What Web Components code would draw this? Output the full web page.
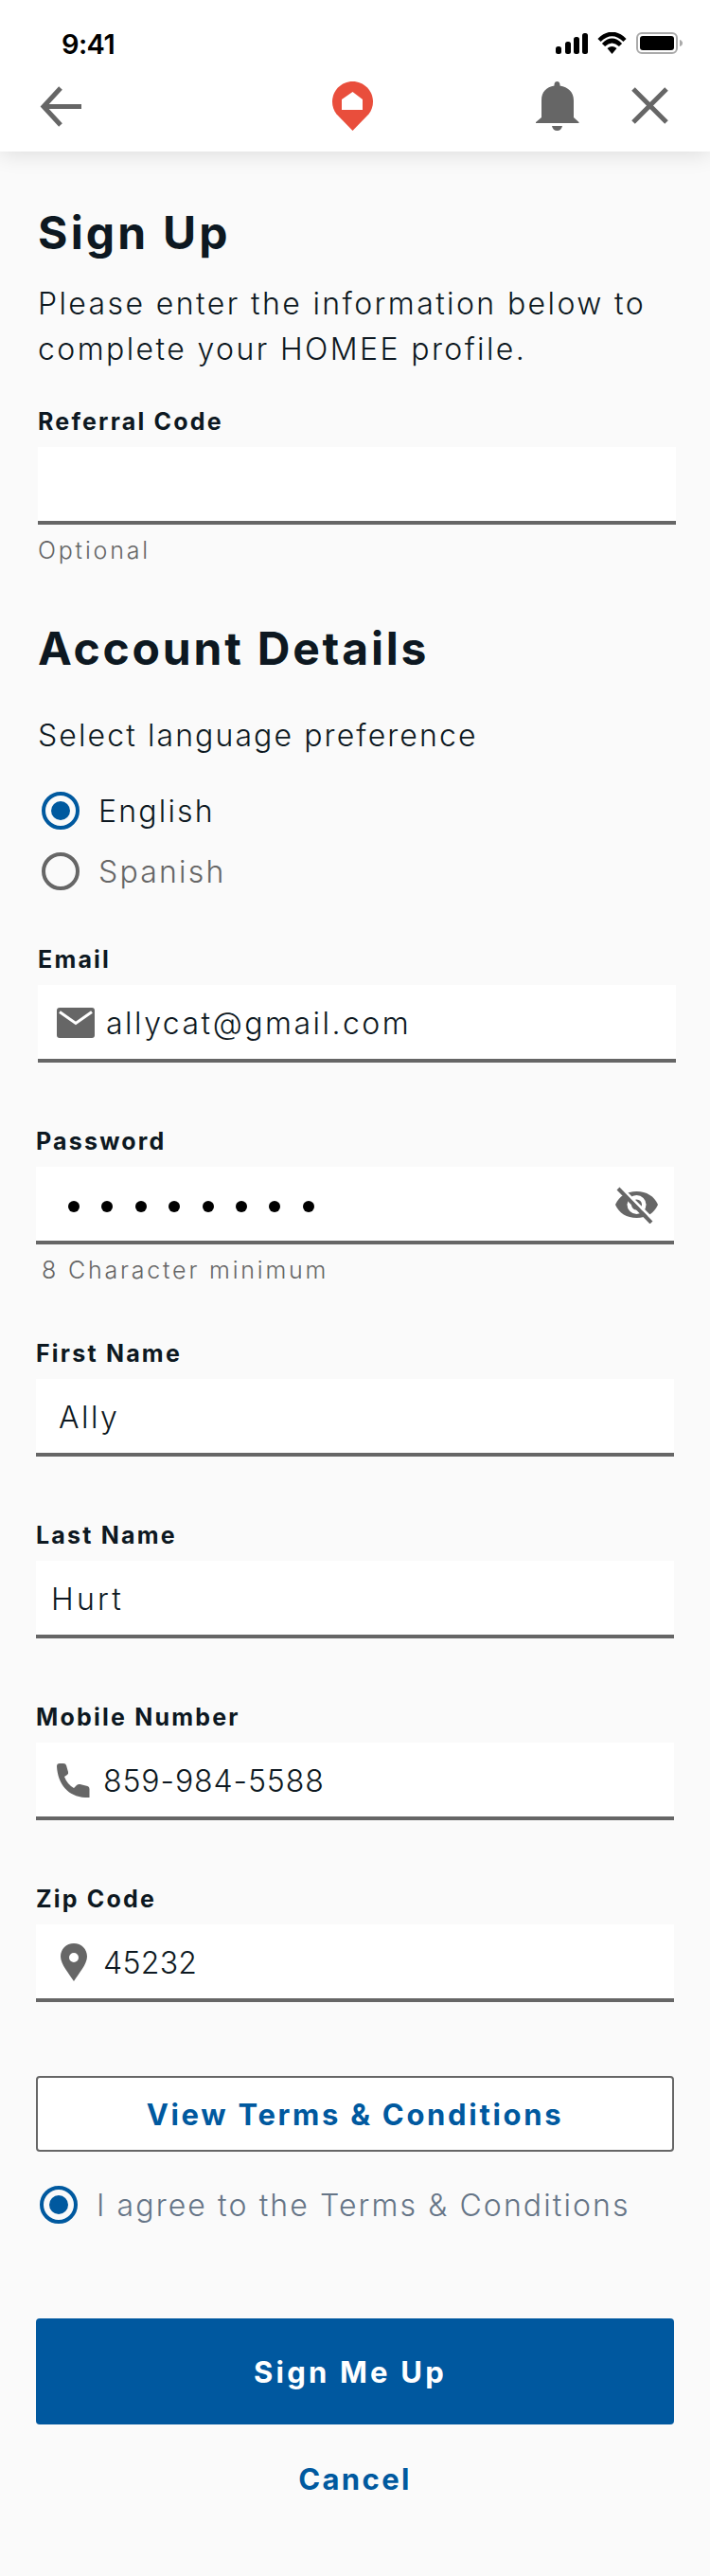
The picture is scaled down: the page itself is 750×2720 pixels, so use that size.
<!DOCTYPE html>
<html><head><meta charset="utf-8">
<style>
html,body{margin:0;padding:0;background:#fafafa}
body{width:750px;height:2720px;overflow:hidden;font-family:Inter,"Noto Sans",sans-serif;color:#0d1821}
</style></head><body>
<template id="t-status"><style>
:host{display:flex;position:relative;z-index:1;justify-content:space-between;height:72px;padding:0 29px 0 65px;box-sizing:border-box;align-items:flex-start;background:#fff}
.t{font:600 29px/30px Inter,sans-serif;color:#000;margin-top:31.500px;letter-spacing:-.6px}
svg{margin-top:34px;display:block}
</style><span class="t">9:41</span>
<svg width="134" height="24" viewBox="0 0 134 24" fill="#000"><rect x="0" y="15" width="6" height="8" rx="2.500"/><rect x="10" y="10" width="6" height="13" rx="2.500"/><rect x="19" y="5" width="6" height="18" rx="2.500"/><rect x="28" y="1" width="6" height="22" rx="2.500"/>
<path d="M46 8.500Q59.500-4.500 73 8.500M50.500 13.500Q59.500 4.500 68.500 13.500" fill="none" stroke="#000" stroke-width="4.500"/><path d="M54.500 17Q59.500 13 64.500 17L59.500 23z"/>
<rect x="86" y="1" width="42" height="21" rx="5" fill="none" stroke="#aaa" stroke-width="2"/><rect x="89" y="4" width="36" height="15" rx="3"/><path d="M131 8q3 1 3 3.500t-3 3.500z" fill="#aaa"/></svg></template>

<template id="t-nav"><style>
:host{display:block;position:relative;height:88px;background:#fff;box-shadow:0 2px 22px rgba(0,0,0,.13)}
svg{display:block;position:absolute}
</style>
<svg style="left:41px;top:18px" width="48" height="45" viewBox="0 0 48 45" fill="none" stroke="#666" stroke-width="5"><path d="M45 22.500H6M23 3L5 22.500 23 42"/></svg>
<svg style="left:351px;top:14px" width="43" height="53" viewBox="0 0 43 53"><path fill="#e94e3c" d="M21.500 0C33.400 0 43 9.600 43 21.500c0 5-1.800 9.500-4.500 13L21.500 52 4.500 34.500C1.800 31 0 26.500 0 21.500 0 9.600 9.600 0 21.500 0z"/><path fill="#fff" d="M10 30V19l11.500-8L32 19v11z"/></svg>
<svg style="left:566px;top:13px" width="46" height="54" viewBox="0 0 46 54" fill="#666"><path d="M0 45v-1l6-5V21C6 12 11 7 19.500 5.500V4.500C19.500 2 21 1 22.500 1s3 1 3 3.500v1C34 7 40 12 40 21v18l5.500 5v1z"/><path d="M17 48h11q-1 5-5.500 5T17 48z"/></svg>
<svg style="left:667px;top:20px" width="39" height="39" viewBox="0 0 39 39" fill="none" stroke="#666" stroke-width="5"><path d="M2 2l35 35M37 2L2 37"/></svg>
</template>

<template id="t-field"><style>
:host{display:block;font-family:Inter,sans-serif}
.l{font-weight:700;font-size:25px;line-height:30px;height:30px;letter-spacing:2.200px;color:#0d1821;margin-bottom:12px;display:block}
.b{height:82px;box-sizing:border-box;padding-top:2px;background:#fff;border-bottom:4px solid #666;display:flex;align-items:center;font-weight:300;font-size:32px;letter-spacing:2.300px;color:#0d1821}
::slotted(svg){display:block;flex:none}
</style><span class="l"></span><div class="b"><slot></slot></div></template>

<template id="t-radio"><style>
:host{display:flex;align-items:center;font-family:Inter,sans-serif;font-weight:300;font-size:32px;letter-spacing:2.200px}
i{display:block;flex:none;width:40px;height:40px;box-sizing:border-box;border-radius:50%;border:4px solid #666;position:relative}
:host([on]) i{border-color:#00599f}
:host([on]) i::after{content:"";position:absolute;inset:6px;border-radius:50%;background:#00599f}
span{line-height:36px;margin-top:2px}
</style><i></i><span><slot></slot></span></template>

<template id="t-btn"><style>
:host{display:flex;align-items:center;justify-content:center;box-sizing:border-box;width:674px;border-radius:4px;font-family:Inter,sans-serif;font-weight:700;font-size:31px;letter-spacing:2.700px}
:host([kind=out]){height:80px;background:#fff;border:2px solid #666;color:#00599f}
:host([kind=fill]){height:112px;background:#00589f;color:#fff}
:host([kind=text]){height:46px;color:#00599f;background:none}
</style><slot></slot></template>

<script>
function tpl(id){return document.getElementById(id).content.cloneNode(true)}
class S extends HTMLElement{constructor(){super();this.attachShadow({mode:'open'}).appendChild(tpl('t-status'))}}
class N extends HTMLElement{constructor(){super();this.attachShadow({mode:'open'}).appendChild(tpl('t-nav'))}}
class F extends HTMLElement{constructor(){super();this.attachShadow({mode:'open'}).appendChild(tpl('t-field'))}
 connectedCallback(){this.shadowRoot.querySelector('.l').textContent=this.getAttribute('label')}}
class R extends HTMLElement{constructor(){super();this.attachShadow({mode:'open'}).appendChild(tpl('t-radio'))}}
class B extends HTMLElement{constructor(){super();this.attachShadow({mode:'open'}).appendChild(tpl('t-btn'))}}
customElements.define('hm-status',S);customElements.define('hm-nav',N);customElements.define('hm-field',F);customElements.define('hm-radio',R);customElements.define('hm-btn',B);
class Form extends HTMLElement{constructor(){super();const r=this.attachShadow({mode:'open'});
r.innerHTML=`<style>
:host{display:block}
.top{padding:58px 36px 0 40px}
.main{padding:0 38px}
h1{margin:0;font:700 48px/56px Inter,sans-serif;letter-spacing:2.800px;color:#0d1821}
p{margin:0;font-weight:300;font-size:32px;line-height:48px;letter-spacing:2.400px;color:#0d1821;white-space:nowrap}
.small{font-weight:300;font-size:25px;line-height:30px;color:#666;letter-spacing:2.800px}
hm-field{width:674px}
</style>
<div class="top"><h1 style="letter-spacing:3.200px">Sign Up</h1>
<p style="margin-top:23px">Please enter the information below to<br>complete your HOMEE profile.</p>
<hm-field label="Referral Code" style="margin-top:37px"></hm-field>
<div class="small" style="margin-top:12px">Optional</div>
<h1 style="margin-top:61px">Account Details</h1>
<p style="margin-top:40px;letter-spacing:2.100px">Select language preference</p>
<hm-radio on style="margin:35px 0 0 4px;gap:20px;color:#0d1821">English</hm-radio>
<hm-radio style="margin:24px 0 0 4px;gap:20px;color:#666">Spanish</hm-radio>
<hm-field label="Email" style="margin-top:58px">
<svg style="margin:0 12px 0 20px" width="40" height="32" viewBox="0 0 40 32" fill="#666"><rect width="40" height="32" rx="3"/><path d="M3 4.500l17 12 17-12" fill="none" stroke="#fff" stroke-width="3"/></svg><span style="letter-spacing:2.500px">allycat@gmail.com</span></hm-field>
</div>
<div class="main">
<hm-field label="Password" style="margin-top:68px"><span style="display:flex;gap:23.400px;margin:4px 0 0 34px">${'<i style="display:block;width:12px;height:12px;border-radius:50%;background:#000"></i>'.repeat(8)}</span>
<svg style="margin-left:auto;margin-right:17px" width="45" height="39" viewBox="0 0 45 39"><path fill="#666" d="M0 19C4 10 12 5 22.500 5S41 10 45 19C41 28 33 33 22.500 33S4 28 0 19z"/><circle cx="22.500" cy="19" r="10" fill="#fff"/><circle cx="22.500" cy="19" r="5.500" fill="#666"/><path d="M6 1L41 36" stroke="#fff" stroke-width="3"/><path d="M3 2L38 38" stroke="#666" stroke-width="4"/></svg></hm-field>
<div class="small" style="margin:12px 0 0 6px">8 Character minimum</div>
<hm-field label="First Name" style="margin-top:58px"><span style="margin-left:24px;letter-spacing:2.500px">Ally</span></hm-field>
<hm-field label="Last Name" style="margin-top:68px"><span style="margin-left:16px;letter-spacing:3.200px">Hurt</span></hm-field>
<hm-field label="Mobile Number" style="margin-top:68px"><svg style="margin:0 13px 0 22px" width="36" height="36" viewBox="0 0 36 36" fill="#666"><path d="M0 3Q0 0 3 0h4q2.500 0 3 2l2 7q.5 2-1 3l-3 2q3 8 10 12l3-3q1.500-1.500 3.500-1l8 2q2 .5 2 3V36H30C12 35 1 22 0 3z"/></svg><span style="letter-spacing:.9px">859-984-5588</span></hm-field>
<hm-field label="Zip Code" style="margin-top:68px"><svg style="margin:0 17px 0 26px" width="28" height="40" viewBox="0 0 28 40"><path fill="#666" fill-rule="evenodd" d="M14 0C22 0 28 6 28 14c0 8-9 18-14 26C9 32 0 22 0 14 0 6 6 0 14 0zm0 10a5 5 0 1 0 0 10 5 5 0 0 0 0-10z"/></svg><span style="letter-spacing:.3px">45232</span></hm-field>
<hm-btn kind="out" style="margin-top:78px">View Terms &amp; Conditions</hm-btn>
<hm-radio on style="margin:36px 0 0 4px;gap:20px;color:#667587;letter-spacing:2.100px">I agree to the Terms &amp; Conditions</hm-radio>
<hm-btn kind="fill" style="margin-top:100px;padding-right:10px;letter-spacing:3.200px">Sign Me Up</hm-btn>
<hm-btn kind="text" style="margin-top:34px;letter-spacing:2.400px">Cancel</hm-btn>
</div>`;}}
customElements.define('hm-form',Form);
</script>
<hm-status></hm-status><hm-nav></hm-nav>
<hm-form></hm-form>
</body></html>
